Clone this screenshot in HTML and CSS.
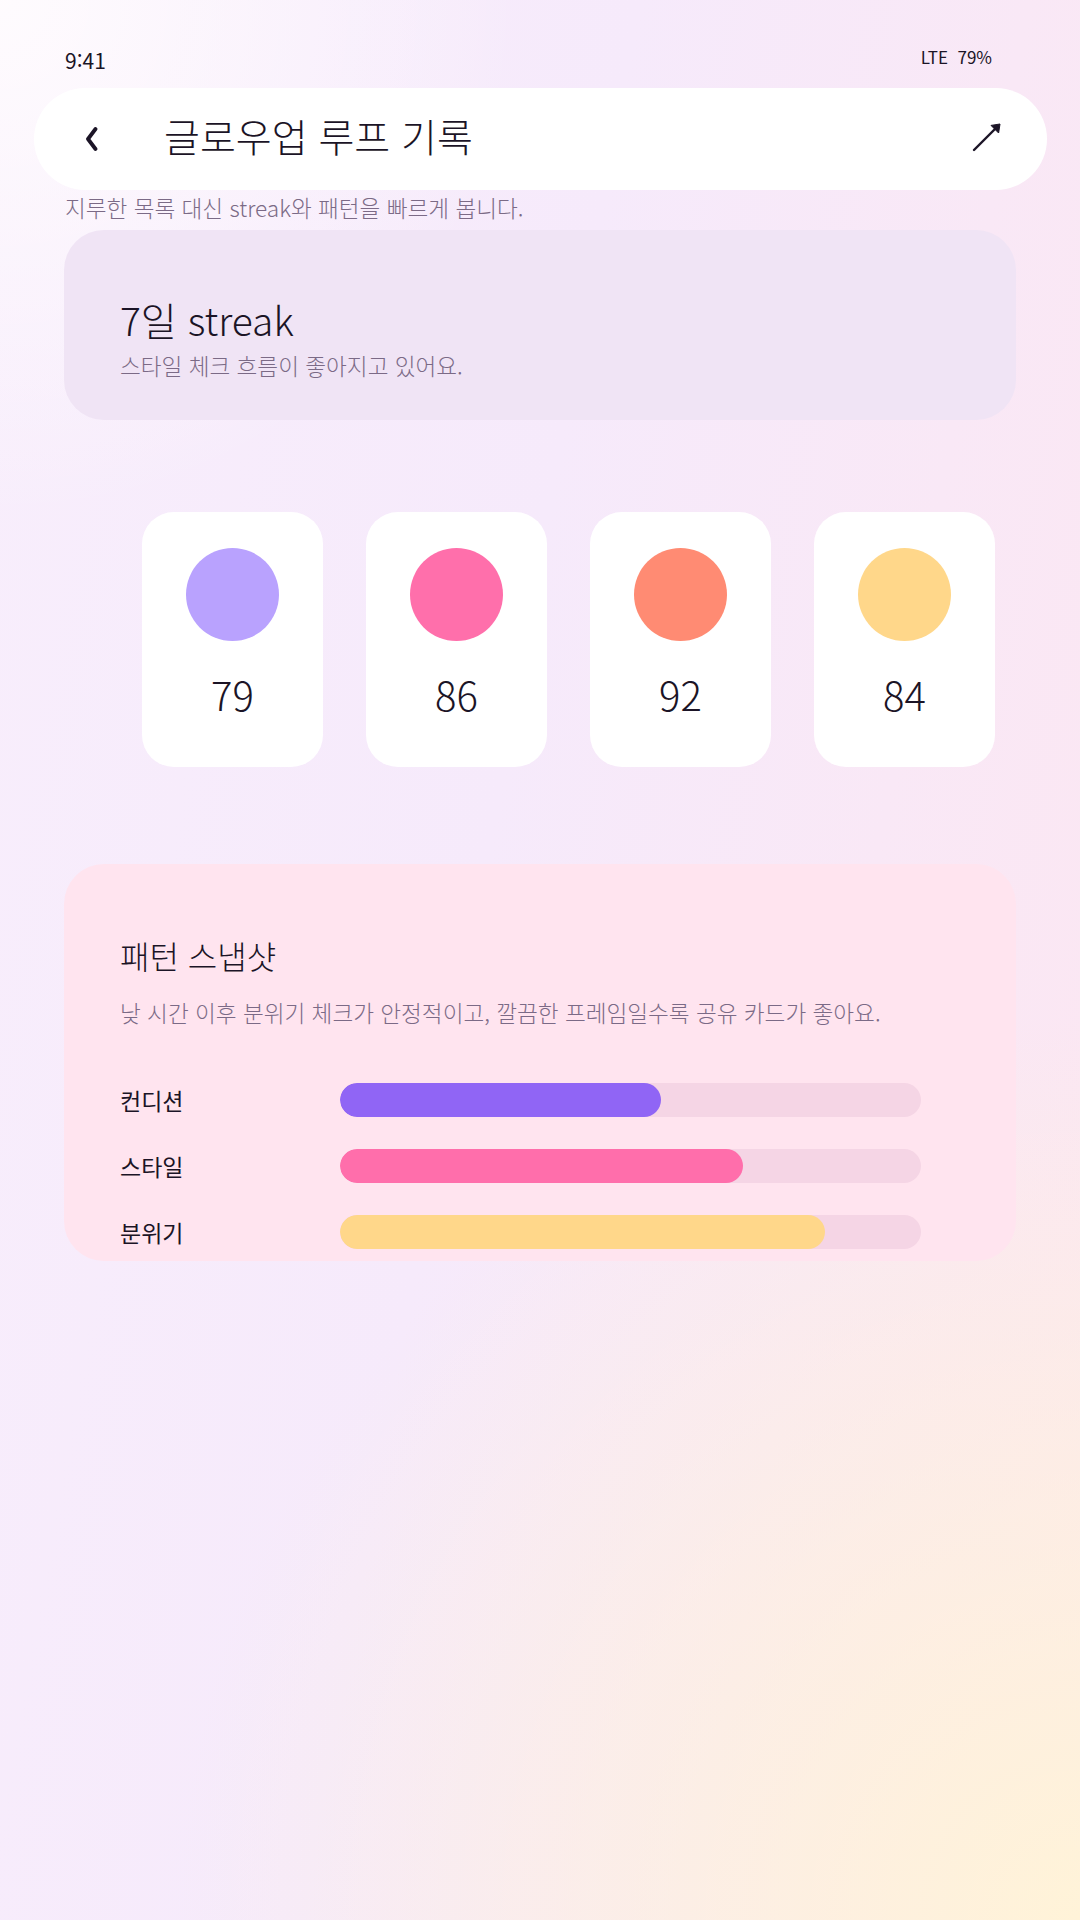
FILE: index.html
```html
<!DOCTYPE html>
<html lang="ko">
<head>
<meta charset="utf-8">
<title>글로우업 루프 기록</title>
<link rel="stylesheet" href="styles.css">
</head>
<body>
<div class="status">
  <span class="time">9:41</span>
  <span class="net">LTE&nbsp; 79%</span>
</div>
<header class="header">
  <svg class="back" width="14" height="24" viewBox="0 0 14 24" aria-hidden="true">
    <path d="M11.5 2 L4 12 L11.5 22" fill="none" stroke="#1b1426" stroke-width="3.8" stroke-linecap="round" stroke-linejoin="round"/>
  </svg>
  <h1 class="title">글로우업 루프 기록</h1>
  <svg class="share" width="34" height="34" viewBox="0 0 34 34" aria-hidden="true">
    <path d="M4 30 L28 6" fill="none" stroke="#1b1426" stroke-width="2.4" stroke-linecap="round"/>
    <path d="M30 4 L21 5.4 L28.6 13 Z" fill="#1b1426" stroke="#1b1426" stroke-width="1" stroke-linejoin="round"/>
  </svg>
</header>
<main class="content">
  <p class="lead">지루한 목록 대신 streak와 패턴을 빠르게 봅니다.</p>

  <section class="streak">
    <h2 class="streak-title">7일 streak</h2>
    <p class="streak-sub">스타일 체크 흐름이 좋아지고 있어요.</p>
  </section>

  <section class="scores">
    <div class="score"><span class="dot dot-lavender"></span><span class="num">79</span></div>
    <div class="score"><span class="dot dot-pink"></span><span class="num">86</span></div>
    <div class="score"><span class="dot dot-coral"></span><span class="num">92</span></div>
    <div class="score"><span class="dot dot-yellow"></span><span class="num">84</span></div>
  </section>

  <section class="pattern">
    <h2 class="pattern-title">패턴 스냅샷</h2>
    <p class="pattern-desc">낮 시간 이후 분위기 체크가 안정적이고, 깔끔한 프레임일수록 공유 카드가 좋아요.</p>
    <div class="bars">
      <div class="bar-row">
        <span class="bar-label">컨디션</span>
        <div class="track"><div class="fill fill-purple" style="width:55.2%"></div></div>
      </div>
      <div class="bar-row">
        <span class="bar-label">스타일</span>
        <div class="track"><div class="fill fill-pink" style="width:69.4%"></div></div>
      </div>
      <div class="bar-row">
        <span class="bar-label">분위기</span>
        <div class="track"><div class="fill fill-yellow" style="width:83.5%"></div></div>
      </div>
    </div>
  </section>
</main>
</body>
</html>
```
FILE: styles.css
```css
* { box-sizing: border-box; }

html, body {
  margin: 0;
  padding: 0;
}

body {
  width: 1080px;
  min-height: 1920px;
  font-family: "Noto Sans CJK KR", "Noto Sans", sans-serif;
  font-weight: 300;
  color: #1b1426;
  background:
    radial-gradient(ellipse 520px 520px at 0% 0%, rgba(255, 252, 254, 0.95) 0%, rgba(255, 252, 254, 0) 100%),
    radial-gradient(ellipse 900px 900px at 100% 100%, #fff3d8 0%, rgba(255, 243, 216, 0) 100%),
    linear-gradient(100deg, #f8eefc 0%, #f6eafb 45%, #fce6f1 100%);
}

h1, h2, p { margin: 0; font-weight: 300; }

/* status bar */
.status {
  display: flex;
  justify-content: space-between;
  align-items: flex-start;
  margin-top: 47px;
  padding: 0 88px 0 65px;
  height: 28px;
}
.time {
  font-size: 21px;
  line-height: 26px;
  font-weight: 400;
}
.net {
  font-size: 17px;
  line-height: 20px;
  font-weight: 400;
}

/* header pill */
.header {
  display: flex;
  align-items: center;
  height: 102px;
  margin: 13px 33px 0 34px;
  padding: 0 43px 0 50px;
  background: #ffffff;
  border-radius: 51px;
}
.back { flex: none; }
.title {
  flex: 1;
  margin-left: 66px;
  font-size: 39px;
  line-height: 48px;
  margin-top: -8px;
}
.share { flex: none; margin-top: -4px; }

/* content */
.content {
  padding: 0 64px;
}
.lead {
  margin-top: 4px;
  margin-left: 1px;
  font-size: 22.6px;
  line-height: 28px;
  color: #7b6a86;
}

.streak {
  margin-top: 8px;
  height: 190px;
  padding: 66px 56px 0;
  background: #f0e4f5;
  border-radius: 40px;
}
.streak-title {
  font-size: 39px;
  line-height: 46px;
}
.streak-sub {
  margin-top: 10px;
  font-size: 22.6px;
  line-height: 28px;
  color: #7b6a86;
}

.scores {
  display: flex;
  gap: 43px;
  margin: 92px 0 0 78px;
}
.score {
  width: 181px;
  height: 255px;
  padding-top: 36px;
  background: #ffffff;
  border-radius: 32px;
  display: flex;
  flex-direction: column;
  align-items: center;
}
.dot {
  width: 93px;
  height: 93px;
  border-radius: 50%;
}
.dot-lavender { background: #b9a2fe; }
.dot-pink { background: #ff6fab; }
.dot-coral { background: #ff8b73; }
.dot-yellow { background: #ffd78a; }
.num {
  margin-top: 29px;
  font-size: 40px;
  line-height: 48px;
}

.pattern {
  margin-top: 97px;
  height: 397px;
  padding: 71px 56px 0;
  background: #ffe4ef;
  border-radius: 40px;
  overflow: hidden;
}
.pattern-title {
  font-size: 32px;
  line-height: 40px;
}
.pattern-desc {
  margin-top: 24px;
  font-size: 22.6px;
  line-height: 28px;
  color: #7b6a86;
}
.bars {
  margin-top: 56px;
  display: flex;
  flex-direction: column;
  gap: 32px;
}
.bar-row {
  display: grid;
  grid-template-columns: 220px 581px;
  align-items: center;
  height: 34px;
}
.bar-label {
  font-size: 23px;
  line-height: 28px;
  font-weight: 400;
}
.track {
  height: 34px;
  border-radius: 17px;
  background: #f5d5e5;
  overflow: hidden;
}
.fill {
  height: 100%;
  border-radius: 17px;
}
.fill-purple { background: #9065f5; }
.fill-pink { background: #ff6eab; }
.fill-yellow { background: #ffd78a; }
```
